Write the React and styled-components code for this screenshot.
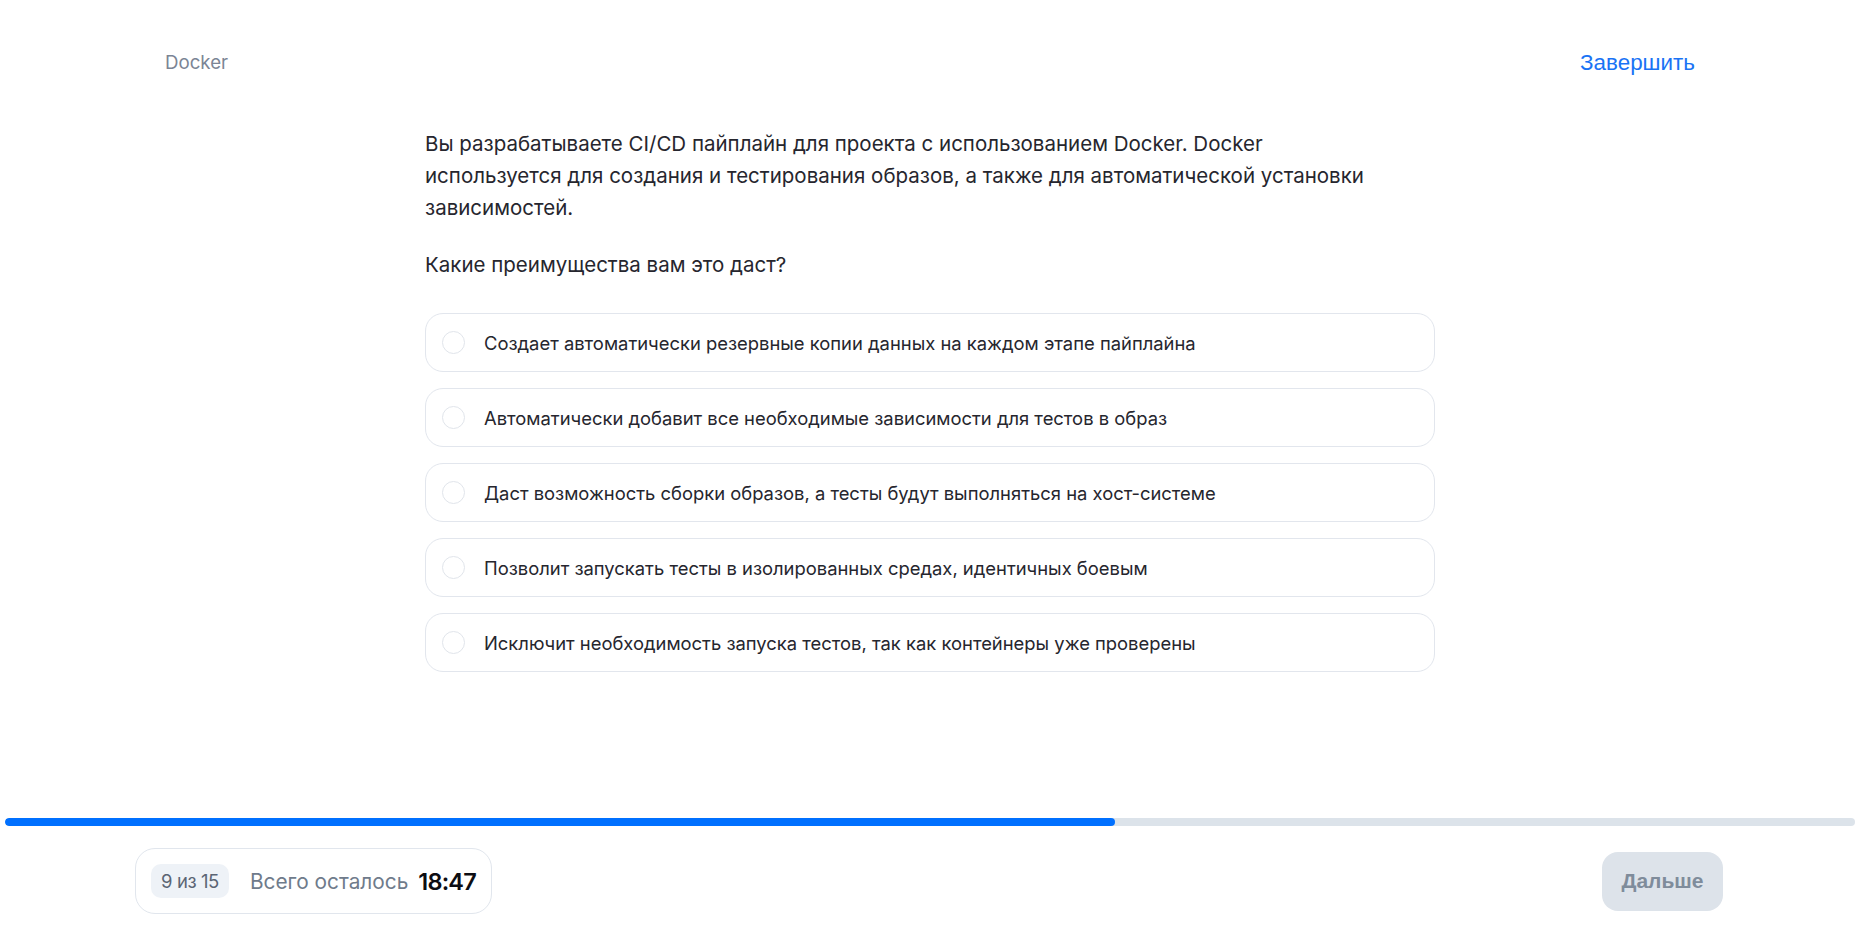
import React from 'react';
import styled, { createGlobalStyle } from 'styled-components';

const GlobalStyle = createGlobalStyle`
  * { box-sizing: border-box; }
  html, body { margin: 0; padding: 0; background: #fff; }
  body {
    font-family: Inter, "Noto Sans", sans-serif;
    color: #26262e;
  }
`;

const Page = styled.div`
  height: 935px;
  display: flex;
  flex-direction: column;
`;

const Header = styled.header`
  display: flex;
  justify-content: space-between;
  align-items: center;
  padding: 50px 165px 0;
  height: 76px;
`;

const Topic = styled.div`
  font-size: 18.7px;
  line-height: 26px;
  color: #7b8595;
`;

const FinishButton = styled.button`
  border: none;
  background: none;
  padding: 0;
  cursor: pointer;
  font-family: "Liberation Sans", Arial, sans-serif;
  font-size: 22.4px;
  line-height: 26px;
  color: #1a73f5;
`;

const Main = styled.main`
  flex: 1;
  width: 1010px;
  margin: 0 auto;
  padding-top: 52px;
`;

const Question = styled.p`
  margin: 0;
  max-width: 960px;
  font-size: 20.5px;
  line-height: 32px;
`;

const Prompt = styled.p`
  margin: 25px 0 32px;
  font-size: 20.5px;
  line-height: 32px;
`;

const Options = styled.div`
  display: flex;
  flex-direction: column;
  gap: 16px;
`;

const Option = styled.label`
  display: flex;
  align-items: center;
  height: 59px;
  padding: 0 16px;
  border: 1px solid #e2e6ed;
  border-radius: 18px;
  cursor: pointer;
  font-size: 18.4px;
`;

const Radio = styled.span`
  width: 23px;
  height: 23px;
  flex: none;
  border: 1.5px solid #e1e5eb;
  border-radius: 50%;
  margin-right: 19px;
`;

const Bottom = styled.div`
  display: flex;
  flex-direction: column;
`;

const Track = styled.div`
  margin: 0 5px;
  height: 8px;
  border-radius: 4px;
  background: #dce3ea;
  overflow: hidden;
`;

const Fill = styled.div`
  height: 100%;
  border-radius: 4px;
  background: #0070ff;
`;

const FooterRow = styled.div`
  display: flex;
  justify-content: space-between;
  align-items: center;
  padding: 22px 137px 21px 135px;
`;

const Status = styled.div`
  display: flex;
  align-items: center;
  height: 66px;
  padding: 0 15px 0 15px;
  border: 1px solid #e1e6ed;
  border-radius: 20px;
`;

const Counter = styled.span`
  display: inline-flex;
  align-items: center;
  height: 34px;
  padding: 0 10px;
  border-radius: 10px;
  background: #eef2f7;
  font-size: 18.5px;
  color: #5b6574;
  letter-spacing: -0.4px;
  margin-right: 21px;
`;

const TimeLabel = styled.span`
  font-size: 20.8px;
  color: #6f7b8b;
  margin-right: 10px;
`;

const Time = styled.span`
  font-size: 23.5px;
  font-weight: 600;
  letter-spacing: -0.8px;
  color: #0d0d12;
`;

const NextButton = styled.button`
  width: 121px;
  height: 59px;
  border: none;
  border-radius: 16px;
  background: #dde3ea;
  color: #7f8c9b;
  font-family: "Liberation Sans", Arial, sans-serif;
  font-weight: 700;
  font-size: 21px;
  cursor: default;
`;

const answers = [
  'Создает автоматически резервные копии данных на каждом этапе пайплайна',
  'Автоматически добавит все необходимые зависимости для тестов в образ',
  'Даст возможность сборки образов, а тесты будут выполняться на хост-системе',
  'Позволит запускать тесты в изолированных средах, идентичных боевым',
  'Исключит необходимость запуска тестов, так как контейнеры уже проверены',
];

export default function App() {
  const current = 9;
  const total = 15;
  return (
    <>
      <GlobalStyle />
      <Page>
        <Header>
          <Topic>Docker</Topic>
          <FinishButton>Завершить</FinishButton>
        </Header>
        <Main>
          <Question>
            Вы разрабатываете CI/CD пайплайн для проекта с использованием Docker. Docker используется для создания и тестирования образов, а также для автоматической установки зависимостей.
          </Question>
          <Prompt>Какие преимущества вам это даст?</Prompt>
          <Options>
            {answers.map(a => (
              <Option key={a}>
                <Radio />
                {a}
              </Option>
            ))}
          </Options>
        </Main>
        <Bottom>
          <Track>
            <Fill style={{ width: `${(current / total) * 100}%` }} />
          </Track>
          <FooterRow>
            <Status>
              <Counter>{current} из {total}</Counter>
              <TimeLabel>Всего осталось</TimeLabel>
              <Time>18:47</Time>
            </Status>
            <NextButton>Дальше</NextButton>
          </FooterRow>
        </Bottom>
      </Page>
    </>
  );
}
